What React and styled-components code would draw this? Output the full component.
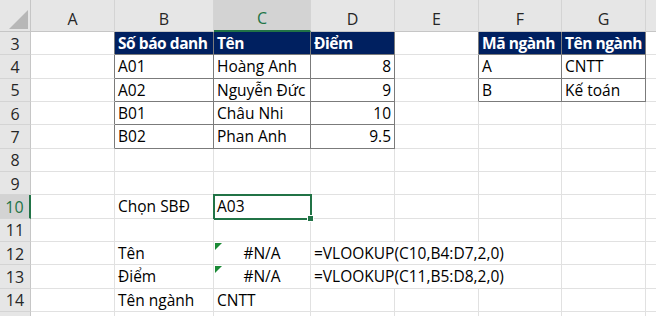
import styled, { createGlobalStyle, css } from "styled-components"

const GlobalStyle = createGlobalStyle`
  html, body { margin: 0; padding: 0; background: #fff; }
  body { font-family: "Open Sans", "Liberation Sans", sans-serif; }
`

const GRID = "#e1e1e1"
const LINE = "#7b7b7b"
const NAVY = "#002060"
const EXCEL_GREEN = "#217346"

const COLUMNS = ["A", "B", "C", "D", "E", "F", "G", "H"]
const WIDTHS = [84, 99, 97, 84, 84, 83, 84, 84]
const ACTIVE_COL = "C"
const ACTIVE_ROW = 10

const Sheet = styled.div`
  width: 656px;
  height: 316px;
  overflow: hidden;
  display: grid;
  grid-template-columns: 31px ${WIDTHS.map((w) => `${w}px`).join(" ")};
  grid-template-rows: 32px repeat(13, 23.34px);
  font-size: 15.5px;
  color: #000;
`

const Corner = styled.div`
  position: relative;
  background: #e6e6e6;
  border-right: 1px solid #c6c6c6;
  border-bottom: 1px solid #c6c6c6;

  &::after {
    content: "";
    position: absolute;
    right: 2px;
    bottom: 2px;
    border-left: 19px solid transparent;
    border-bottom: 19px solid #b7b7b7;
  }
`

const ColHead = styled.div`
  display: flex;
  align-items: flex-end;
  justify-content: center;
  padding-bottom: 1px;
  background: ${({ $active }) => ($active ? "#d3d3d3" : "#e6e6e6")};
  color: ${({ $active }) => ($active ? EXCEL_GREEN : "#262626")};
  border-right: 1px solid #d4d4d4;
  border-bottom: ${({ $active }) =>
    $active ? `2px solid ${EXCEL_GREEN}` : "1px solid #c6c6c6"};
  box-sizing: border-box;
  font-size: 16px;
`

const RowHead = styled.div`
  display: flex;
  align-items: center;
  justify-content: center;
  padding-top: 1px;
  font-size: 16px;
  background: ${({ $active }) => ($active ? "#d3d3d3" : "#e6e6e6")};
  color: ${({ $active }) => ($active ? EXCEL_GREEN : "#262626")};
  border-right: ${({ $active }) =>
    $active ? `2px solid ${EXCEL_GREEN}` : "1px solid #c6c6c6"};
  border-bottom: 1px solid #d4d4d4;
  box-sizing: border-box;
`

const Cell = styled.div`
  position: relative;
  box-sizing: border-box;
  padding: 1px 3px 0;
  line-height: 21px;
  white-space: nowrap;
  text-align: ${({ $align }) => $align || "left"};
  border-right: 1px solid ${({ $r }) => ($r ? LINE : GRID)};
  border-bottom: 1px solid ${({ $b }) => ($b ? LINE : GRID)};
  grid-column: ${({ $span }) => ($span ? `span ${$span}` : "auto")};

  ${({ $head }) =>
    $head &&
    css`
      background: ${NAVY};
      color: #fff;
      font-weight: 700;
      letter-spacing: -0.45px;
      overflow: hidden;
    `}

  ${({ $flag }) =>
    $flag &&
    css`
      &::before {
        content: "";
        position: absolute;
        top: 1px;
        left: 1px;
        border-top: 7px solid #1a8a35;
        border-right: 7px solid transparent;
      }
    `}

  ${({ $selected }) =>
    $selected &&
    css`
      &::after {
        content: "";
        position: absolute;
        inset: -1px -2px -2px -1px;
        border: 2px solid ${EXCEL_GREEN};
      }
      & > i {
        position: absolute;
        right: -4px;
        bottom: -4px;
        width: 5px;
        height: 5px;
        background: ${EXCEL_GREEN};
        border: 1px solid #fff;
        z-index: 1;
      }
    `}
`

// cell contents per row, keyed by column letter
const ROWS = [
  { n: 3, B: { v: "Số báo danh", head: true }, C: { v: "Tên", head: true }, D: { v: "Điểm", head: true }, F: { v: "Mã ngành", head: true }, G: { v: "Tên ngành", head: true } },
  { n: 4, B: { v: "A01" }, C: { v: "Hoàng Anh" }, D: { v: "8", align: "right" }, F: { v: "A" }, G: { v: "CNTT" } },
  { n: 5, B: { v: "A02" }, C: { v: "Nguyễn Đức" }, D: { v: "9", align: "right" }, F: { v: "B" }, G: { v: "Kế toán" } },
  { n: 6, B: { v: "B01" }, C: { v: "Châu Nhi" }, D: { v: "10", align: "right" } },
  { n: 7, B: { v: "B02" }, C: { v: "Phan Anh" }, D: { v: "9.5", align: "right" } },
  { n: 8 },
  { n: 9 },
  { n: 10, B: { v: "Chọn SBĐ" }, C: { v: "A03", selected: true } },
  { n: 11 },
  { n: 12, B: { v: "Tên" }, C: { v: "#N/A", align: "center", flag: true }, D: { v: "=VLOOKUP(C10,B4:D7,2,0)", span: 3 } },
  { n: 13, B: { v: "Điểm" }, C: { v: "#N/A", align: "center", flag: true }, D: { v: "=VLOOKUP(C11,B5:D8,2,0)", span: 3 } },
  { n: 14, B: { v: "Tên ngành" }, C: { v: "CNTT" } },
  { n: 15, hideLabel: true },
]

// bordered ranges: columns and rows that get dark right/bottom edges
const TABLES = [
  { cols: ["B", "C", "D"], from: 3, to: 7 },
  { cols: ["F", "G"], from: 3, to: 5 },
]

const edgesFor = (col, n) => {
  let r = false
  let b = false
  TABLES.forEach((t) => {
    if (n < t.from || n > t.to) return
    const i = COLUMNS.indexOf(t.cols[0])
    if (t.cols.includes(col)) {
      r = true
      b = true
    } else if (COLUMNS.indexOf(col) === i - 1) {
      r = true
    }
  })
  return { r, b }
}

const SheetRow = ({ row }) => {
  const cells = []
  let skip = 0
  COLUMNS.forEach((col) => {
    if (skip > 0) {
      skip -= 1
      return
    }
    const data = row[col] || {}
    const { r, b } = edgesFor(col, row.n)
    if (data.span) skip = data.span - 1
    cells.push(
      <Cell
        key={col}
        $r={r}
        $b={b}
        $align={data.align}
        $head={data.head}
        $flag={data.flag}
        $selected={data.selected}
        $span={data.span}
      >
        {data.v}
        {data.selected && <i />}
      </Cell>
    )
  })
  return (
    <>
      <RowHead $active={row.n === ACTIVE_ROW}>{row.hideLabel ? "" : row.n}</RowHead>
      {cells}
    </>
  )
}

const App = () => (
  <>
    <GlobalStyle />
    <Sheet>
      <Corner />
      {COLUMNS.map((c) => (
        <ColHead key={c} $active={c === ACTIVE_COL}>
          {c === "H" ? "" : c}
        </ColHead>
      ))}
      {ROWS.map((row) => (
        <SheetRow key={row.n} row={row} />
      ))}
    </Sheet>
  </>
)

export default App
